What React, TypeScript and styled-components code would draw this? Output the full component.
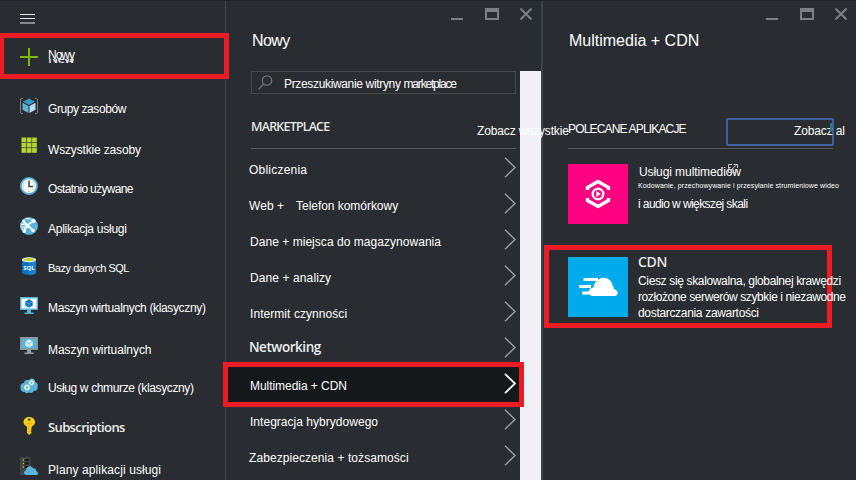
import React from "react";
import styled, { createGlobalStyle, css } from "styled-components";

const GlobalStyle = createGlobalStyle`
  * { box-sizing: border-box; }
  body { margin: 0; background: #292d31; overflow: hidden; }
`;

const sans = `"Liberation Sans", Arial, sans-serif`;
const humanist = `"Open Sans", "Noto Sans", sans-serif`;
const humanistMedium = `"Noto Sans", "Open Sans", sans-serif`;

const Portal = styled.div`
  display: flex;
  width: 856px;
  height: 480px;
  overflow: hidden;
  background: #292d31;
  border-top: 1px solid #1f2326;
  color: #fff;
  font: 12px/16px ${sans};
`;

const Label = styled.span<{ $track?: number; $top?: number; $size?: number; $left?: number }>`
  display: block;
  flex: none;
  white-space: pre;
  font-size: ${(p) => p.$size ?? 12}px;
  letter-spacing: ${(p) => p.$track ?? 0}px;
  margin-top: ${(p) => p.$top ?? 0}px;
  margin-left: ${(p) => p.$left ?? 0}px;
`;

const StrongLabel = styled(Label)`
  font-family: ${humanist};
  font-weight: 600;
  color: #eceded;
`;

const HeadLabel = styled(StrongLabel)`
  font-family: ${humanistMedium};
  font-weight: 500;
`;

/* Navigation */
const Nav = styled.nav`
  flex: none;
  width: 226px;
  height: 480px;
  border-right: 1px solid #43484c;
`;

const MenuBar = styled.div`
  height: 32px;
  padding: 12px 0 0 20px;
  svg { display: block; }
`;

const NewItem = styled.div`
  position: relative;
  display: flex;
  width: 229px;
  height: 46px;
  border: 5px solid #ed1c24;
  border-left-width: 4px;
  padding: 9px 0 0 16px;
  margin-bottom: 7px;
  svg { margin-top: 1px; }
`;

const NewText = styled.div`
  margin-left: 10px;
  display: flex;
  flex-direction: column;
`;

const NewTitle = styled(Label)`
  height: 12px;
  line-height: 16px;
`;

const ClippedCaption = styled.div`
  height: 4px;
  overflow: hidden;
  display: flex;
  align-items: flex-end;
  font: 600 13px/14px ${humanist};
  color: #e8e9ea;
  span { margin-bottom: -2px; letter-spacing: -0.7px; }
`;

const NavRow = styled.div`
  display: flex;
  height: 40px;
  padding-left: 20px;
`;

const NavIcon = styled.svg`
  flex: none;
  width: 18px;
  height: 18px;
  margin: 11px 10px 0 0;
  overflow: visible;
`;

const Fleck = styled.i`
  width: 3px;
  height: 1px;
  margin: 16px 0 0 -27px;
  background: #b9bbbd;
`;

/* Blades */
const Blade = styled.section`
  position: relative;
  flex: none;
  display: flex;
  flex-direction: column;
  height: 480px;
`;

const MarketBlade = styled(Blade)`
  width: 317px;
  border-right: 2px solid #3f4448;
  z-index: 1;
`;

const AppsBlade = styled(Blade)`
  width: 313px;
  z-index: 2;
`;

const TitleBar = styled.header`
  flex: none;
  display: flex;
  justify-content: space-between;
  height: 70px;
  padding: 0 8px 0 26px;
`;

const WindowButtons = styled.svg`
  display: block;
  width: 82px;
  height: 14px;
  margin-top: 6px;
`;

const MarketBody = styled.div`
  display: flex;
  justify-content: space-between;
  height: 410px;
`;

const MarketContent = styled.div`
  width: 294px;
`;

const ScrollTrack = styled.div`
  width: 21px;
  background: #f0f0f7;
`;

const Search = styled.div`
  display: flex;
  width: 265px;
  height: 23px;
  margin-left: 25px;
  border: 1px solid #43484c;
  padding-left: 6px;
  svg { flex: none; display: block; margin-top: 3px; }
`;

const SectionHead = styled.div`
  display: flex;
  align-items: flex-start;
  width: 265px;
  margin-left: 25px;
  border-bottom: 1px solid #575b5f;
`;

const MarketHead = styled(SectionHead)`
  height: 55px;
`;

const SeeAll = styled.a`
  display: block;
  margin: 29px 0 0 auto;
  width: 39px;
  white-space: nowrap;
  letter-spacing: -0.14px;
  position: relative;
`;

const CategoryRow = styled.div<{ $active?: boolean }>`
  position: relative;
  display: flex;
  height: 36px;
  padding-left: 23px;
  ${(p) =>
    p.$active &&
    css`
      width: 301px;
      height: 45px;
      margin: -4px 0 -5px -3px;
      padding-left: 22px;
      border: 5px solid #ed1c24;
      background: #15181b;
    `}
`;

const Chevron = styled.svg<{ $active?: boolean }>`
  display: block;
  flex: none;
  width: 12px;
  height: 21px;
  margin: ${(p) => (p.$active ? "6px 3px 0 auto" : "7px 4px 0 auto")};
  stroke: ${(p) => (p.$active ? "#ffffff" : "#9a9da0")};
`;

const Categories = styled.div`
  padding-top: 1px;
`;

const AppsHead = styled(SectionHead)`
  height: 78px;
`;

const FocusedLink = styled.a`
  display: flex;
  width: 108px;
  height: 28px;
  margin: 47px -1px 0 auto;
  border: 2px solid #3b5f9f;
  border-radius: 2px;
  padding: 3px 0 0 66px;
  white-space: nowrap;
  letter-spacing: -0.13px;
`;

const Caret = styled.i`
  flex: none;
  width: 2px;
  height: 8px;
  margin-left: -15px;
  background: #16808f;
`;

const AppCard = styled.article`
  display: flex;
  height: 60px;
  margin: 15px 0 0 25px;
`;

const CdnCard = styled.article`
  display: flex;
  width: 288px;
  height: 83px;
  margin: 21px 0 0 1px;
  border: 5px solid #ed1c24;
  padding: 7px 0 0 19px;
`;

const Tile = styled.div<{ $color: string }>`
  flex: none;
  width: 60px;
  height: 60px;
  margin-right: 10px;
  background: ${(p) => p.$color};
  svg { display: block; }
`;

const CardText = styled.div`
  width: 210px;
  flex: none;
`;

const CardTitle = styled.div`
  display: flex;
  height: 17px;
  svg { flex: none; display: block; margin-left: -13px; }
`;

const TinyText = styled.div`
  width: 222px;
  height: 12px;
  white-space: nowrap;
  font-size: 7px;
  line-height: 9px;
  letter-spacing: 0.11px;
`;

const CdnTitle = styled.div`
  height: 16px;
  font: 500 14px/16px ${humanistMedium};
  letter-spacing: -0.3px;
  margin-top: -3px;
  margin-bottom: 3px;
  color: #eceded;
`;

const Blue = "#59b4d9";

const icons: Record<string, React.ReactNode> = {
  groups: (
    <>
      <path d="M3 1.5H1.2Q.5 1.5.5 3v12q0 1.500.7 1.500H3M15 1.500h1.800q.7 0 .7 1.500v12q0 1.500-.7 1.500H15" fill="none" stroke="#7a7d80" />
      <path d="M9 1.500 15 4.700 9 8 3 4.700z" fill="#3999c6" />
      <path d="M2.500 5.700 8.500 9v7L2.500 12.700z" fill="#59b4d9" />
      <path d="M15.500 5.700 9.500 9v7l6-3.300z" fill="#b5dff0" />
    </>
  ),
  grid: (
    <g fill="#b8d432">
      {[1.5, 6.8, 12.1].map((x) => [0.5, 5.8, 11.1].map((y) => <rect key={`${x}-${y}`} x={x} y={y} width="4.700" height="4.700" />))}
    </g>
  ),
  clock: (
    <>
      <circle cx="9" cy="9" r="8" fill="#fff" stroke={Blue} strokeWidth="2" />
      <path d="M9 3v1M9 14v1M3 9h1M14 9h1M4.800 4.800l.6.6M13.200 4.800l-.6.6M4.800 13.200l.6-.6M13.200 13.200l-.6-.6" stroke="#888" />
      <path d="M9 4v5.500h4" fill="none" stroke="#3e3e3e" strokeWidth="1.500" />
    </>
  ),
  app: (
    <>
      <circle cx="9" cy="9" r="9" fill={Blue} />
      <path d="M4 15Q6 8 13.500 4M3.500 4Q7 9 13.500 13.500M.8 7.500Q5 6 8 9" fill="none" stroke="#fff" strokeWidth="1.700" />
      <path d="M5 1.500Q9 1 13.500 4" fill="none" stroke="#fff" strokeWidth="1" />
      <path d="M.4 8.500 7 9 4 15.500Q.8 13 .4 8.500z" fill="#fff" fillOpacity=".45" />
      <circle cx="7.500" cy="8.700" r="2.100" fill="#fff" />
      <circle cx="13.500" cy="4" r="2" fill="#fff" />
      <circle cx="13" cy="13.500" r="1.800" fill="#fff" />
      <circle cx="4.500" cy="14.500" r="1.500" fill="#fff" />
      <circle cx="3.700" cy="4" r="1.400" fill="#fff" />
    </>
  ),
  sql: (
    <>
      <path d="M2 2.500v13c0 3 14 3 14 0v-13z" fill="#0072c6" />
      <path d="M9 2.500h7v13c0 1.500-3 2.300-7 2.300z" fill="#1a80cd" />
      <ellipse cx="9" cy="2.700" rx="7" ry="2.500" fill="#fff" />
      <ellipse cx="9" cy="2.700" rx="5.300" ry="1.600" fill="#b8d432" />
      <text x="9" y="13" textAnchor="middle" fill="#fff" fontFamily="Open Sans" fontWeight="700" fontSize="6">SQL</text>
    </>
  ),
  vmClassic: (
    <>
      <path d="M0 0h18v13H0z" fill={Blue} />
      <path d="M1.500 1.500h15v10h-15z" fill="#fff" />
      <path d="M7 13h4v2.500h2.500V17h-9v-1.500H7z" fill={Blue} />
      <path d="M9 2.300 12.700 4.400v4.200L9 10.700 5.300 8.600V4.400z" fill="#0072c6" />
      <path d="M5.500 4.800 9 6.600l3.500-1.800M9 6.600v3.800" fill="none" stroke="#8fc4e8" strokeWidth=".6" />
    </>
  ),
  vm: (
    <>
      <path d="M0 0h18v13H0z" fill="#8d9195" />
      <path d="M1.500 1.500h15v10h-15z" fill={Blue} />
      <path d="M7 13h4v2.500h2.500V17h-9v-1.500H7z" fill="#9a9da0" />
      <path d="M9 2.300 12.700 4.400v4.200L9 10.700 5.300 8.600V4.400z" fill="#dff1f9" />
      <path d="M5.500 4.800 9 6.600l3.500-1.800M9 6.600v3.800" fill="none" stroke={Blue} strokeWidth=".7" />
    </>
  ),
  cloud: (
    <>
      <path d="M4.500 15C1.500 15 0 12.500.6 10.500 0 8 1.800 6 4 6 4.300 3 7.500 2 9 3.300 11 0 15.500 1.500 15 5c2.500.5 3.500 3 2.500 5 .8 2.500-1.500 4-3.500 3.700-1.500 2.700-4 2.500-5 1.500-1.500 1.500-3.500 1-4.500-.2z" fill={Blue} />
      <g fill="none" stroke="#fff">
        <circle cx="7" cy="10.500" r="1.800" strokeWidth="1.300" />
        <circle cx="7" cy="10.500" r="2.700" strokeWidth=".8" strokeDasharray="1.100 1.100" />
        <circle cx="11.500" cy="5.700" r="1.600" strokeWidth="1.200" />
        <circle cx="11.500" cy="5.700" r="2.400" strokeWidth=".8" strokeDasharray="1 1" />
      </g>
      <circle cx="7" cy="10.500" r="1" fill="#7fba00" />
      <circle cx="11.500" cy="5.700" r=".8" fill="#7fba00" />
    </>
  ),
  key: (
    <>
      <path d="M9.200 0c3.200 0 5.800 2.200 5.800 5 0 2-1.200 3.800-3.300 4.600v1.400l-1 1 1 1-1 1.200 1 1.200L9.200 18 7 16V9.600C4.900 8.800 3.500 7 3.500 5c0-2.800 2.500-5 5.700-5z" fill="#fcd116" />
      <circle cx="9.200" cy="2.600" r="1.200" fill="#292d31" />
      <path d="M8.700 9v7.300" stroke="#e0a800" strokeWidth="1" />
      <path d="M5.500 6.800h7.400" stroke="#e0a800" strokeWidth=".8" />
    </>
  ),
  plan: (
    <>
      <path d="M0 0h10.500v18H0z" fill="#424446" />
      <path d="M2 3H9M2 6.500H9M2 10H9" stroke="#16191b" strokeWidth="2" />
      <path d="M2.500 3h1.800M2.500 6.500h1.800M2.500 10h1.800" stroke="#b8d432" strokeWidth="1.300" />
      <path d="M6.500 18C3.800 18 2.800 14.500 5.800 13.500 6 9.500 10.500 7.500 13 11.200c2.300-.3 3.200 1.200 3 2.700C18.800 14.500 18.500 18 16.500 18z" fill={Blue} />
    </>
  ),
};

type NavEntry = { icon: string; text: string; track: number; top: number; strong?: boolean; size?: number; fleck?: boolean };

const navItems: NavEntry[] = [
  { icon: "groups", text: "Grupy zasobów", track: -0.42, top: 15 },
  { icon: "grid", text: "Wszystkie zasoby", track: -0.16, top: 16 },
  { icon: "clock", text: "Ostatnio używane", track: -0.66, top: 15 },
  { icon: "app", text: "Aplikacja usługi", track: -0.25, top: 15, fleck: true },
  { icon: "sql", text: "Bazy danych SQL", track: -0.47, top: 14, size: 11 },
  { icon: "vmClassic", text: "Maszyn wirtualnych (klasyczny)", track: -0.35, top: 14 },
  { icon: "vm", text: "Maszyn wirtualnych", track: -0.07, top: 16 },
  { icon: "cloud", text: "Usług w chmurze (klasyczny)", track: -0.36, top: 14 },
  { icon: "key", text: "Subscriptions", track: -0.63, top: 13, strong: true, size: 13 },
  { icon: "plan", text: "Plany aplikacji usługi", track: 0.11, top: 16 },
];

type Category = { text: string; track: number; top?: number; left?: number; strong?: boolean; active?: boolean; extra?: string };

const categories: Category[] = [
  { text: "Obliczenia", track: 0.22 },
  { text: "Web +", track: 0.05, extra: "Telefon komórkowy" },
  { text: "Dane + miejsca do magazynowania", track: 0.04, left: 1 },
  { text: "Dane + analizy", track: 0.1, left: 1 },
  { text: "Intermit czynności", track: 0.06, left: 1 },
  { text: "Networking", track: -0.45, top: 9, strong: true },
  { text: "Multimedia + CDN", track: -0.05, top: 11, active: true },
  { text: "Integracja hybrydowego", track: 0.03, left: 1 },
  { text: "Zabezpieczenia + tożsamości", track: 0.07 },
];

function Controls() {
  return (
    <WindowButtons viewBox="0 0 82 14">
      <path d="M0 12h12" stroke="#7d8083" strokeWidth="2" />
      <path d="M34 1h14v12H34zM36 5v6h10V5z" fill="#7d8083" fillRule="evenodd" />
      <path d="M69.500 1.500l11 11M80.500 1.500l-11 11" stroke="#7d8083" strokeWidth="2" />
    </WindowButtons>
  );
}

export default function App() {
  return (
    <>
      <GlobalStyle />
      <Portal>
        <Nav>
          <MenuBar>
            <svg width="15" height="12" viewBox="0 0 15 12">
              <path d="M0 1.500h15M0 5.500h15M0 10h15" stroke="#e8e9ea" strokeWidth="1.200" />
            </svg>
          </MenuBar>
          <NewItem>
            <svg width="18" height="18" viewBox="0 0 18 18">
              <path d="M9 0v18M0 9h18" stroke="#7fba00" strokeWidth="2" />
            </svg>
            <NewText>
              <NewTitle $track={-1}>Nowy</NewTitle>
              <ClippedCaption>
                <span>New</span>
              </ClippedCaption>
            </NewText>
          </NewItem>
          {navItems.map((item) => {
            const Text = item.strong ? StrongLabel : Label;
            return (
              <NavRow key={item.text}>
                <NavIcon viewBox="0 0 18 18">{icons[item.icon]}</NavIcon>
                <Text $track={item.track} $top={item.top} $size={item.size}>
                  {item.text}
                </Text>
                {item.fleck && <Fleck />}
              </NavRow>
            );
          })}
        </Nav>

        <MarketBlade>
          <TitleBar>
            <Label $size={16} $track={-0.6} $top={32}>Nowy</Label>
            <Controls />
          </TitleBar>
          <MarketBody>
            <MarketContent>
              <Search>
                <svg width="15" height="15" viewBox="0 0 15 15" fill="none" stroke="#73777a" strokeWidth="1.200">
                  <circle cx="9" cy="5.500" r="4.700" />
                  <path d="M5.700 9 .5 14.300" />
                </svg>
                <Label $left={11} $top={4} $track={-0.34}>Przeszukiwanie witryny </Label>
                <Label $top={4} $track={-1.2}>marketplace</Label>
              </Search>
              <MarketHead>
                <HeadLabel $size={12.5} $track={-0.75} $top={25}>MARKETPLACE</HeadLabel>
                <SeeAll>Zobacz wszystkie</SeeAll>
              </MarketHead>
              <Categories>
                {categories.map((c) => {
                  const Text = c.strong ? StrongLabel : Label;
                  return (
                    <CategoryRow key={c.text} $active={c.active}>
                      <Text $track={c.track} $top={c.top ?? 12} $left={c.left} $size={c.strong ? 13.5 : 12}>
                        {c.text}
                      </Text>
                      {c.extra && <Label $top={12} $left={12} $track={-0.04}>{c.extra}</Label>}
                      <Chevron $active={c.active} viewBox="0 0 12 21" fill="none" strokeWidth={c.active ? 1.8 : 1.4}>
                        <path d="M1 .8 11 10.500 1 20.200" />
                      </Chevron>
                    </CategoryRow>
                  );
                })}
              </Categories>
            </MarketContent>
            <ScrollTrack />
          </MarketBody>
        </MarketBlade>

        <AppsBlade>
          <TitleBar>
            <Label $size={16} $top={32}>Multimedia + CDN</Label>
            <Controls />
          </TitleBar>
          <AppsHead>
            <Label $track={-0.83} $top={50}>POLECANE APLIKACJE</Label>
            <FocusedLink>
              <span>Zobacz al</span>
              <Caret />
            </FocusedLink>
          </AppsHead>
          <AppCard>
            <Tile $color="#ff0080">
              <svg width="60" height="60" viewBox="0 0 60 60" fill="none" stroke="#fff">
                <path d="M19.500 26v-2.500L30 17.500l10.500 6V26M19.500 34v2.500L30 42.500l10.500-6V34" strokeWidth="3.400" />
                <circle cx="30" cy="30" r="5.300" strokeWidth="2.400" />
                <path d="M28.300 27v6l4.700-3z" fill="#fff" stroke="none" />
              </svg>
            </Tile>
            <CardText>
              <CardTitle>
                <Label $left={1} $track={-0.08}>Usługi multimediów</Label>
                <svg width="10" height="9" viewBox="0 0 10 9" fill="none" stroke="#c5c7c9">
                  <path d="M4 .5H.5v8h7V5M3 6 9 .5M5.500.5H9.500V4" />
                </svg>
              </CardTitle>
              <TinyText>Kodowanie, przechowywanie i przesyłanie strumieniowe wideo</TinyText>
              <Label $top={3} $track={-0.58}>i audio w większej skali</Label>
            </CardText>
          </AppCard>
          <CdnCard>
            <Tile $color="#00abec">
              <svg width="60" height="60" viewBox="0 0 60 60">
                <path d="M25 39c-5.500 0-6-8 .5-8.500C26 25 31 21 35 20.700c5 0 9 3 9.500 7.800 1.500.8 1.300 2.500 1 3.500C51 33 51 39 46.500 39z" fill="#fff" />
                <path d="M15.500 22.500H30M11 29.500h12M14 36h9" stroke="#fff" strokeWidth="2.800" />
              </svg>
            </Tile>
            <CardText>
              <CdnTitle>CDN</CdnTitle>
              <Label $track={-0.35}>Ciesz się skalowalna, globalnej krawędzi</Label>
              <Label $track={-0.41}>rozłożone serwerów szybkie i niezawodne</Label>
              <Label $track={-0.32}>dostarczania zawartości</Label>
            </CardText>
          </CdnCard>
        </AppsBlade>
      </Portal>
    </>
  );
}
